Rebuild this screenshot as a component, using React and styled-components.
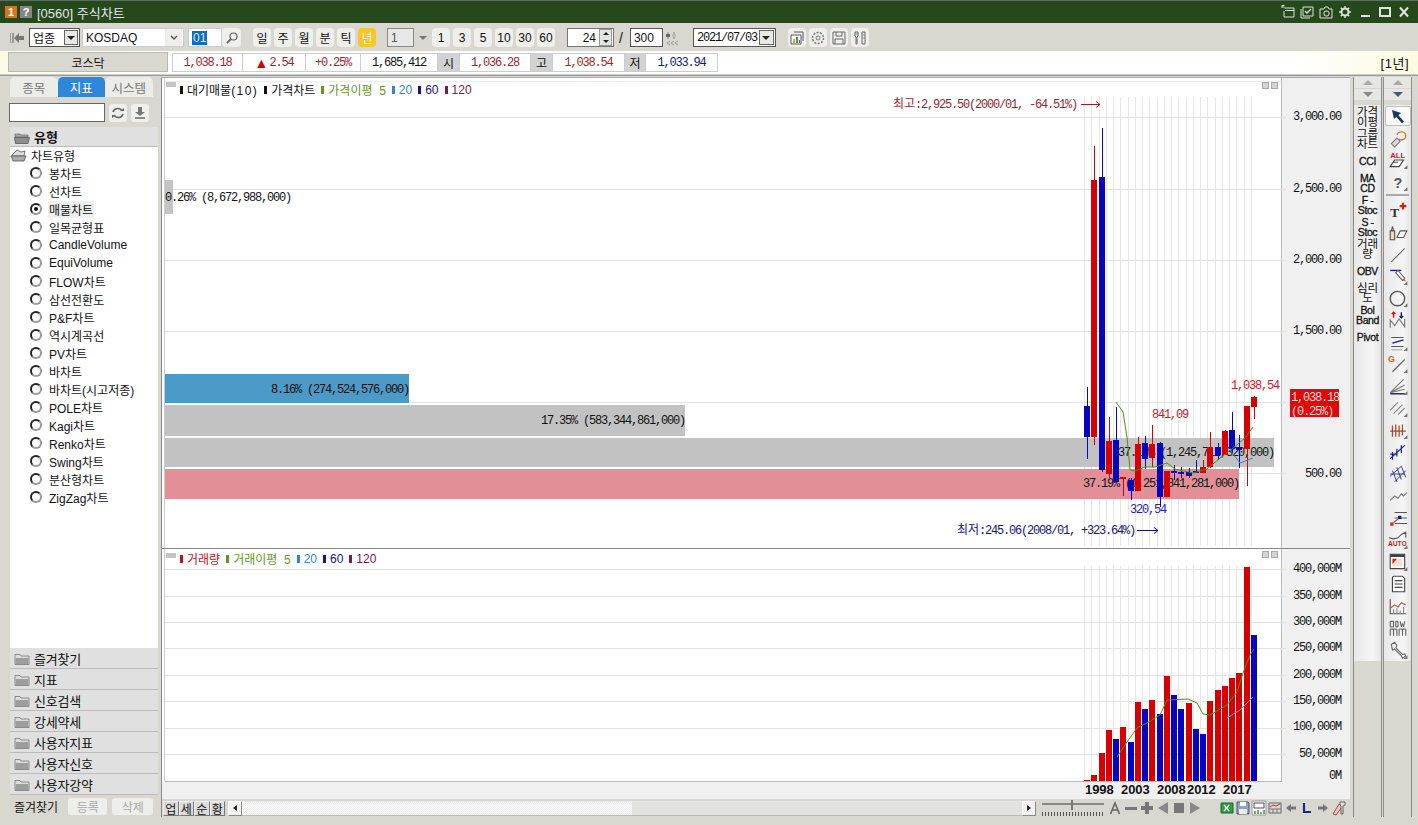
import React from "react";
import styled, { createGlobalStyle } from "styled-components";

const SANS = "'Liberation Sans','Noto Sans CJK KR',sans-serif";
const MONO = "'Liberation Mono','Noto Sans CJK KR',monospace";
const RED = "#d80000";
const BLUE = "#0606c0";

const GlobalStyle = createGlobalStyle`
  html, body { margin: 0; padding: 0; background: #d8d8d0; overflow: hidden; }
  body { font-family: ${SANS}; font-size: 12px; color: #111; }
  * { box-sizing: border-box; }
`;

// [color, wickTop, wickBottom, bodyTop, bodyBottom]
const candles = [
  ["b", 387, 459, 406, 437], ["r", 146, 445, 180, 437], ["b", 128, 472, 177, 470], ["r", 417, 480, 441, 474],
  ["b", 407, 482, 440, 482], ["r", 477, 496, 477, 479], ["b", 478, 500, 480, 491], ["r", 437, 491, 444, 491],
  ["b", 436, 469, 443, 459], ["r", 425, 467, 444, 458], ["b", 442, 507, 443, 497], ["r", 471, 497, 471, 497],
  ["b", 465, 480, 471, 473], ["b", 467, 478, 472, 474], ["b", 468, 478, 472, 476], ["b", 460, 473, 471, 473],
  ["r", 460, 473, 467, 473], ["r", 432, 468, 447, 467], ["b", 443, 460, 447, 455], ["r", 430, 455, 431, 455],
  ["b", 412, 453, 430, 449], ["b", 435, 468, 447, 450], ["r", 406, 486, 406, 449], ["r", 396, 419, 397, 407],
];

const volumes = [
  ["r", 780], ["r", 775], ["r", 753], ["r", 730], ["b", 739], ["r", 727], ["b", 742], ["r", 702],
  ["b", 709], ["r", 700], ["b", 714], ["r", 676], ["b", 695], ["b", 709], ["r", 703], ["b", 729],
  ["b", 734], ["r", 701], ["r", 690], ["r", 686], ["r", 678], ["r", 673], ["r", 567], ["b", 635],
];

const slotX = (i) => Math.round(1087 + 7.25 * i);
const chartTypes = ["봉차트", "선차트", "매물차트", "일목균형표", "CandleVolume", "EquiVolume", "FLOW차트", "삼선전환도", "P&F차트", "역시계곡선", "PV차트", "바차트", "바차트(시고저종)", "POLE차트", "Kagi차트", "Renko차트", "Swing차트", "분산형차트", "ZigZag차트"];
const folders = ["즐겨찾기", "지표", "신호검색", "강세약세", "사용자지표", "사용자신호", "사용자강약"];
const railLabels = [["가격", "이평"], ["그룹", "차트"], ["CCI"], ["MA", "CD"], ["F -", "Stoc"], ["S -", "Stoc"], ["거래", "량"], ["OBV"], ["심리", "도"], ["Bol", "Band"], ["Pivot"]];

const Page = styled.div`
  width: 1418px;
  height: 825px;
  display: flex;
  flex-direction: column;
  background: #d8d8d0;
`;

const TitleBar = styled.header`
  height: 23px;
  flex: none;
  display: flex;
  align-items: center;
  padding: 0 7px 0 5px;
  background: #25491c;
  border-top: 1px solid #5a6f58;
  color: #e4e8e2;
  font-size: 13px;
`;

const Badge = styled.span`
  width: 12px;
  height: 12px;
  margin-right: 3px;
  display: flex;
  align-items: center;
  justify-content: center;
  font: bold 11px ${SANS};
  color: #fff;
  background: ${(p) => p.$bg};
`;

const Title = styled.span`
  margin-left: 2px;
  flex: 1;
`;

const Glyph = styled.svg`
  display: block;
  flex: none;
  width: ${(p) => p.$s || 18}px;
  height: ${(p) => p.$s || 18}px;
`;

const TitleIcons = styled.div`
  display: flex;
  align-items: center;
  gap: 3px;
`;

const WindowButtons = styled.div`
  display: flex;
  align-items: center;
  gap: 5px;
  margin-left: 6px;
`;

const Toolbar = styled.div`
  height: 28px;
  flex: none;
  display: flex;
  align-items: center;
  padding: 1px 0 0 8px;
  background: #d8d8d0;
`;

const Group = styled.div`
  display: flex;
  align-items: center;
  gap: ${(p) => p.$gap || 0}px;
  margin-left: ${(p) => p.$ml || 0}px;
`;

const Field = styled.div`
  width: ${(p) => p.$w}px;
  height: 19px;
  display: flex;
  align-items: center;
  justify-content: ${(p) => p.$end ? "flex-end" : "flex-start"};
  padding: 0 3px;
  background: ${(p) => p.$bg || "#fff"};
  border: 1px solid ${(p) => p.$line || "#555"};
  border-right-color: ${(p) => p.$line || "#ccc"};
  border-bottom-color: ${(p) => p.$line || "#ccc"};
  font-family: ${(p) => p.$mono ? MONO : SANS};
  letter-spacing: ${(p) => p.$mono ? "-1.2px" : "0"};
  color: ${(p) => p.$color || "#111"};
`;

const Selected = styled.span`
  background: #0f6cc4;
  color: #dfe8f0;
  padding: 0 1px;
`;

const DropBtn = styled.div`
  width: ${(p) => p.$w || 14}px;
  height: ${(p) => p.$h || 15}px;
  margin-left: auto;
  margin-right: -2px;
  display: flex;
  align-items: center;
  justify-content: center;
  background: ${(p) => p.$bg || "#e8e8e4"};
  border: ${(p) => p.$flat ? "none" : "1px solid #666"};
`;

const Arrow = styled.span`
  width: 0;
  height: 0;
  border-left: ${(p) => p.$s || 4}px solid transparent;
  border-right: ${(p) => p.$s || 4}px solid transparent;
  ${(p) => p.$up ? "border-bottom" : "border-top"}: ${(p) => p.$s || 4}px solid ${(p) => p.$c || "#222"};
`;

const ToolBtn = styled.button`
  width: ${(p) => p.$w || 18}px;
  height: 19px;
  padding: 0;
  display: flex;
  align-items: center;
  justify-content: center;
  border: none;
  border-radius: 4px;
  background: ${(p) => p.$on ? "#f7c62f" : "#efefeb"};
  color: ${(p) => p.$on ? "#fff8d8" : "#111"};
  font: 12px ${SANS};
`;

const Spinner = styled.div`
  width: 13px;
  height: 17px;
  margin-right: -2px;
  margin-left: 3px;
  display: flex;
  flex-direction: column;
  align-items: center;
  justify-content: space-around;
  background: #e4e4e0;
  border: 1px solid #999;
`;

const Slash = styled.span`
  margin: 0 7px 0 5px;
  font-size: 14px;
`;

const InfoRow = styled.div`
  height: 24px;
  flex: none;
  display: flex;
  align-items: flex-start;
  padding: 2px 10px 0 8px;
  background: linear-gradient(90deg, #fdfbe6 0, #fff 172px, #fff 1290px, #fdfae0 100%);
  border-bottom: 1px solid #ccc;
`;

const MarketBtn = styled.div`
  width: 160px;
  height: 20px;
  margin: -1px 4px 0 0;
  display: flex;
  align-items: center;
  justify-content: center;
  background: #d8d8d0;
  border: 1px solid #b8b8b0;
`;

const Cell = styled.div`
  width: ${(p) => p.$w}px;
  height: 19px;
  display: flex;
  align-items: center;
  justify-content: center;
  background: ${(p) => p.$head ? "#d2d2d0" : "#fff"};
  border: 1px solid #c8ccd8;
  border-left: ${(p) => p.$first ? "1px solid #c8ccd8" : "none"};
  color: ${(p) => p.$color || "#111"};
  font-family: ${(p) => p.$head ? SANS : MONO};
  letter-spacing: ${(p) => p.$head ? "0" : "-1.2px"};
`;

const Triangle = styled.span`
  color: ${RED};
  font-family: ${SANS};
  font-size: 14px;
  line-height: 12px;
  letter-spacing: 0;
  margin-right: 1px;
`;

const Period = styled.div`
  margin-left: auto;
  margin-right: -1px;
  height: 19px;
  display: flex;
  align-items: center;
  font-size: 13px;
  letter-spacing: 0.5px;
`;

const Body = styled.main`
  height: 744px;
  flex: none;
  display: flex;
  padding: 1px 6px 0 8px;
  border-top: 1px solid #999;
`;

const Sidebar = styled.aside`
  width: 150px;
  height: 740px;
  flex: none;
  display: flex;
  flex-direction: column;
`;

const Tabs = styled.nav`
  height: 20px;
  flex: none;
  display: flex;
  padding: 0 5px 0 2px;
`;

const Tab = styled.div`
  width: 47.5px;
  display: flex;
  align-items: center;
  justify-content: center;
  border-radius: 5px 5px 0 0;
  background: ${(p) => p.$on ? "#2f87dc" : "#ecece8"};
  color: ${(p) => p.$on ? "#fff" : "#777"};
  font-size: 12.5px;
`;

const SearchRow = styled.div`
  height: 19px;
  flex: none;
  margin-top: 6px;
  display: flex;
  align-items: center;
  padding-left: 1px;
  gap: 4px;
`;

const SearchBox = styled.div`
  width: 96px;
  height: 19px;
  background: #fff;
  border: 1px solid #666;
`;

const IconBtn = styled.div`
  width: 18px;
  height: 18px;
  display: flex;
  align-items: center;
  justify-content: center;
  background: #efefeb;
  border-radius: 3px;
`;

const FolderHead = styled.div`
  height: ${(p) => p.$bold ? 20 : 21}px;
  flex: none;
  margin: ${(p) => p.$bold ? 5 : 0}px 0 0 2px;
  padding-left: 3px;
  display: flex;
  align-items: center;
  gap: 3px;
  background: #e0e0e0;
  border-bottom: 1px solid #bbb;
  font-weight: ${(p) => p.$bold ? "bold" : "normal"};
  font-size: 13px;
  letter-spacing: ${(p) => p.$bold ? "0" : "-0.2px"};
`;

const Tree = styled.div`
  flex: 1;
  margin-left: 2px;
  background: #fff;
`;

const TreeRoot = styled.div`
  height: 17px;
  display: flex;
  align-items: center;
  gap: 3px;
`;

const RadioRow = styled.div`
  height: 18px;
  display: flex;
  align-items: center;
  padding-left: 20px;
`;

const Radio = styled.span`
  width: 12px;
  height: 12px;
  margin-right: 6px;
  flex: none;
  display: flex;
  align-items: center;
  justify-content: center;
  border-radius: 50%;
  background: #fff;
  border: 2px solid #222;
  border-right-color: #999;
  border-bottom-color: #999;

  &::after {
    content: "";
    width: 4px;
    height: 4px;
    border-radius: 50%;
    background: ${(p) => p.$on ? "#111" : "transparent"};
  }
`;

const RadioLabel = styled.span`
  padding: 0 1px;
  white-space: nowrap;
  background: ${(p) => p.$on ? "#efefef" : "transparent"};
`;

const SideFooter = styled.div`
  height: 22px;
  flex: none;
  display: flex;
  align-items: center;
  padding-left: 6px;
`;

const FootBtn = styled.div`
  width: ${(p) => p.$w}px;
  height: 17px;
  margin-left: ${(p) => p.$ml}px;
  display: flex;
  align-items: center;
  justify-content: center;
  border-radius: 3px;
  background: #eeeeea;
  color: #aaa;
`;

const ChartFrame = styled.section`
  width: 1189px;
  height: 740px;
  flex: none;
  margin-left: 3px;
  display: flex;
  flex-direction: column;
  border-left: 1px solid #8a8a8a;
  border-top: 1px solid #aaa;
  background: #f0f0f0;
`;

const Panel = styled.div`
  position: relative;
  height: ${(p) => p.$h}px;
  flex: none;
  border-bottom: ${(p) => p.$line ? "1px solid #888" : "none"};
`;

const PlotSvg = styled.svg`
  display: block;
  width: 1188px;
  height: 100%;
`;

const PlotText = styled.text`
  font-family: ${MONO};
  font-size: 12px;
  letter-spacing: -1.2px;
`;

const Ko = styled.tspan`
  letter-spacing: 0;
`;

const YearText = styled.text`
  font-family: ${SANS};
  font-size: 13px;
  font-weight: bold;
  letter-spacing: -0.1px;
`;

const Legend = styled.div`
  position: absolute;
  left: 18px;
  top: ${(p) => p.$top}px;
  display: flex;
  align-items: center;
  gap: 6px;
  white-space: pre;
`;

const LegendItem = styled.span`
  display: flex;
  align-items: center;
  gap: 4px;
  color: ${(p) => p.$c};

  &::before {
    content: "";
    width: 3px;
    height: 8px;
    background: ${(p) => p.$c};
  }
`;

const WideDigits = styled.span`
  letter-spacing: 1.4px;
`;

const CollapseMark = styled.span`
  position: absolute;
  left: 4px;
  top: 4px;
  width: 10px;
  height: 5px;
  background: #c4c4c4;
`;

const PanelBtns = styled.div`
  position: absolute;
  left: 1100px;
  top: ${(p) => p.$top}px;
  display: flex;
  gap: 2px;
`;

const PanelBtn = styled.span`
  width: 7px;
  height: 7px;
  background: #d4d4d4;
  border: 1px solid #aaa;
`;

const ScrollRow = styled.div`
  height: 18px;
  flex: none;
  display: flex;
  align-items: center;
  background: #d8d8d0;
`;

const SheetTab = styled.div`
  width: 15.5px;
  height: 15px;
  flex: none;
  margin-left: ${(p) => p.$first ? "1px" : "0"};
  display: flex;
  align-items: center;
  justify-content: center;
  background: #dcdcdc;
  border: 1px solid #777;
  border-left-color: #eee;
  border-top-color: #eee;
  font-size: 12px;
`;

const ScrollBtn = styled.div`
  width: 14px;
  height: 15px;
  flex: none;
  margin-left: ${(p) => p.$ml || 0}px;
  display: flex;
  align-items: center;
  justify-content: center;
  background: #f2f2ee;
  border: 1px solid #888;
  border-left-color: #fff;
  border-top-color: #fff;
`;

const ScrollTrack = styled.div`
  width: 390px;
  height: 15px;
  flex: none;
  background: ${(p) => p.$thumb ? "#e2e2de" : "repeating-conic-gradient(#fff 0 25%, #ececea 0 50%) 0 0 / 2px 2px"};
  border-top: 1px solid #e8e8e8;
  border-bottom: 1px solid #bbb;
`;

const Slider = styled.div`
  position: relative;
  width: 62px;
  height: 16px;
  flex: none;
  margin-left: 6px;
`;

const SliderGroove = styled.div`
  height: 2px;
  margin-top: 3px;
  background: #888;
`;

const SliderThumb = styled.div`
  position: absolute;
  left: 29px;
  top: 0;
  width: 2px;
  height: 10px;
  background: #777;
`;

const SliderTicks = styled.div`
  position: absolute;
  left: 0;
  right: 0;
  bottom: 0;
  height: 4px;
  background: repeating-linear-gradient(90deg, #555 0 1px, transparent 1px 3px);
`;

const PlainGlyphs = styled.div`
  display: flex;
  flex: none;
  align-items: center;
  margin-left: ${(p) => p.$ml}px;
`;

const Rails = styled.div`
  margin-left: 3px;
  display: flex;
  gap: 1px;
  flex: none;
`;

const Rail = styled.div`
  width: 29px;
  height: 740px;
  display: flex;
  flex-direction: column;
  border-left: 1px solid #8c8c8c;
  border-right: 1px solid #8c8c8c;
`;

const Stepper = styled.div`
  height: 23px;
  flex: none;
  display: flex;
  flex-direction: column;
  gap: 1px;
`;

const StepBtn = styled.div`
  flex: 1;
  display: flex;
  align-items: center;
  justify-content: center;
  background: #e6e6e2;
`;

const RailList = styled.div`
  height: 556px;
  flex: none;
  margin-top: 5px;
  padding-top: 1px;
  display: flex;
  flex-direction: column;
  background: linear-gradient(90deg, #e8e8e8, #f6f6f6 70%, #e4e4e4);
`;

const RailItem = styled.div`
  height: 22px;
  flex: none;
  display: flex;
  flex-direction: column;
  align-items: center;
  justify-content: center;
  line-height: 10px;
  font-size: ${(p) => p.$latin ? "10.5px" : "11.5px"};
  letter-spacing: ${(p) => p.$latin ? "-0.4px" : "0"};
  -webkit-text-stroke: ${(p) => p.$latin ? "0.3px #111" : "0"};
  white-space: nowrap;
`;

const RailIconSlot = styled.div`
  height: 22px;
  flex: none;
  display: flex;
  align-items: center;
  justify-content: center;

  svg {
    width: 20px;
    height: 20px;
  }
`;

const PressedSlot = styled.div`
  width: 26px;
  height: 20px;
  margin: 0 auto 1px;
  display: flex;
  align-items: center;
  justify-content: center;
  background: #fafafa;
  border: 1px solid #bbb;
  border-radius: 2px;
`;

const RailRule = styled.div`
  height: 2px;
  margin: 1px 2px 3px;
  background: #aaa;
`;

const Corner = () => <path d="M14 17h3.5v-3.5z" fill="#777" />;

const Icon = ({ s = 18, corner, children }) => (
  <Glyph $s={s} viewBox={`0 0 ${s} ${s}`} fill="none">
    {children}
    {corner && <Corner />}
  </Glyph>
);

const Folder = ({ open }) => (
  <Icon s={18}>
    {open ? (
      <>
        <path d="M2 6h5l1 1h7v2H2z" fill="#a8a8a8" stroke="#666" strokeWidth=".7" />
        <path d="M1.5 9.5h14l1 0-1.5 6H2.5z" fill="#8e8e8e" stroke="#555" strokeWidth=".8" />
      </>
    ) : (
      <>
        <path d="M2 5.5h5l1 1.5h8v8.5H2z" fill="#dcdcdc" stroke="#777" strokeWidth=".8" />
        <path d="M2.6 9h12.8v6H2.6z" fill="#9d9d9d" />
      </>
    )}
  </Icon>
);

const railIcons = [
  <Icon key="a"><path d="M3 3l9 3-2.6 2.2 5.6 6.2-2 1.8-5.6-6.2L5 12z" fill="#173a5e" /></Icon>,
  <Icon key="b"><path d="M3 14l5-5 3 3-5 5z" fill="#ddd" stroke="#777" /><path d="M8 6c2-4 8-3 8 1s-4 4-6 3" stroke="#e07820" strokeWidth="1.2" /></Icon>,
  <Icon key="c" corner><text x="2" y="7" fontFamily={SANS} fontSize="7" fontWeight="bold" fill="#d02020">ALL</text><path d="M2 15l4-6h8l-4 6zM5 11l4 0" stroke="#444" fill="#fff" /></Icon>,
  <Icon key="d" corner><text x="5" y="14" fontFamily={SANS} fontSize="13" fontWeight="bold" fill="#555">?</text></Icon>,
  null,
  <Icon key="e"><text x="2" y="15" fontFamily="'Liberation Serif',serif" fontSize="12" fontWeight="bold" fill="#333">T</text><path d="M10.500 5.500h6M13.500 2.500v6" stroke="#e01818" strokeWidth="2" /></Icon>,
  <Icon key="f"><path d="M2 8h4v8H2zM3 8l1-4 1 4" stroke="#555" fill="#f2d8c0" /><path d="M8 14l3-6h6l-3 6z" stroke="#555" fill="#fff" /></Icon>,
  <Icon key="g"><path d="M3 16L15 4" stroke="#666" /></Icon>,
  <Icon key="h" corner><path d="M2 4h10" stroke="#1a1a90" strokeWidth="1.2" /><path d="M7 6l2-2 6 7-2 2z" stroke="#666" fill="#fff" /><path d="M13 13l2-2 1 3z" fill="#e06060" /></Icon>,
  <Icon key="i" corner><circle cx="8.500" cy="9.500" r="6.500" stroke="#555" strokeWidth="1.2" /></Icon>,
  <Icon key="j"><path d="M2 16V9l4 5 4-6 5 7V8" stroke="#777" /><path d="M5 7V2M3.400 3.600L5 2l1.600 1.600" stroke="#d01010" strokeWidth="1.2" /><path d="M12 2v5M10.400 5.400L12 7l1.600-1.600" stroke="#1010c0" strokeWidth="1.2" /></Icon>,
  <Icon key="k" corner><path d="M3 5h11M3 13h11" stroke="#555" /><path d="M4 10l10-3" stroke="#1a1a90" strokeWidth="1.2" /><path d="M3 16h10" stroke="#aaa" /></Icon>,
  <Icon key="l" corner><text x="0" y="7" fontFamily={SANS} fontSize="8" fontWeight="bold" fill="#d86018">G</text><path d="M4 16L15 5" stroke="#666" strokeWidth="1.1" /></Icon>,
  <Icon key="m" corner><path d="M2 15L14 3M2 15L15 8M2 15l13-3" stroke="#777" /><path d="M2 16h13" stroke="#1a1a90" strokeWidth="1.3" /></Icon>,
  <Icon key="n" corner><path d="M2 11L9 4M5 14l8-8M9 15l6-6" stroke="#888" /></Icon>,
  <Icon key="o" corner><path d="M2 10h14M4 5v10M7 4v11M10 5v10M13 4v10" stroke="#b04028" strokeWidth="1.1" /></Icon>,
  <Icon key="p"><path d="M2 15L15 3M4 9v7M8 6v7M12 3v7M2 11h6" stroke="#1f1f90" strokeWidth="1.1" /></Icon>,
  <Icon key="q"><path d="M2 11L12 2M6 16L16 6M4 6l4 10M8 3l4 11M12 2l4 10M2 9h13" stroke="#3a3a9c" strokeWidth=".9" /></Icon>,
  <Icon key="r"><path d="M2 13l4-4 3 2 3-4 2 2 3-3" stroke="#777" /></Icon>,
  <Icon key="s"><path d="M6 4h11M6 9h11M6 14h11" stroke="#555" /><path d="M9 7h3v3H9z" fill="#1515c0" /><path d="M2 13h3v3H2z" fill="#d03020" /><path d="M5 13l4-3" stroke="#c03030" /></Icon>,
  <Icon key="t" corner><path d="M1 7l4 1 4-1 3-3 4-2v5" stroke="#555" /><text x="0" y="14" fontFamily={SANS} fontSize="6" fontWeight="bold" fill="#c81818">AUTO</text></Icon>,
  <Icon key="u" corner><path d="M2 2h13v13H2z" stroke="#444" fill="#fff" /><path d="M2 2h13v2.500H2z" fill="#444" /><path d="M4 6h9v7H4z" fill="#f4e0dc" /><path d="M4 6h4l-4 5z" fill="#e02010" /></Icon>,
  <Icon key="v"><path d="M5 2h8l2 2v12H4V3z" stroke="#444" fill="#fff" /><path d="M6 6h7M6 9h7M6 12h7" stroke="#444" /></Icon>,
  <Icon key="w"><path d="M2 3v13h14" stroke="#555" /><path d="M5 16v-4M8 16v-5M11 16v-3M14 16v-6" stroke="#888" /><path d="M2 11l4-3 3 2 3-4 4 2" stroke="#c05040" /></Icon>,
  <Icon key="x"><path d="M2 3h3v5H2zM7 3h2v5H7zM11 3l1 5 1-3 1 3 1-5M2 10h6M2 10v6M5 10v6M8 10v6M10 10h6M10 10v6M13 10v6M16 10v6" stroke="#555" strokeWidth=".9" /></Icon>,
  <Icon key="y" corner><path d="M3 4l3-2 2 3-1 2 6 6 2-.5.8 2-2.600 1.800-1.200-2-6-6-2 .7z" stroke="#666" fill="#f4f4f4" /></Icon>,
];

const titleIcons = [
  <Icon key="1" s={16}><path d="M5 4h9v9H4V7M2 1.500l3 3M2 4V1.500h2.500" stroke="#dbe4d6" /><path d="M5 6.500h9" stroke="#dbe4d6" /></Icon>,
  <Icon key="2" s={16}><path d="M4 3h10v9H4zM2 5v9h9" stroke="#dbe4d6" /><path d="M6 7l2 2 4-4" stroke="#dbe4d6" strokeWidth="1.3" /></Icon>,
  <Icon key="3" s={16}><path d="M2 5h4l1-2h3l1 2h3v9H2z" stroke="#dbe4d6" /><rect x="6" y="7" width="5" height="5" rx="2" stroke="#dbe4d6" /></Icon>,
  <Icon key="4" s={16}><circle cx="8" cy="8" r="3.500" stroke="#dbe4d6" strokeWidth="2" /><path d="M8 2v2M8 12v2M2 8h2M12 8h2M3.800 3.800l1.400 1.400M10.800 10.800l1.400 1.400M3.800 12.200l1.400-1.400M10.800 5.200l1.400-1.400" stroke="#dbe4d6" strokeWidth="1.4" /></Icon>,
];

const UpperPlot = () => (
  <PlotSvg viewBox="162 78 1188 470" shapeRendering="crispEdges">
    <rect x="162" y="78" width="1120" height="470" fill="#fff" />
    <rect x="1282" y="78" width="68" height="470" fill="#f0f0f0" />
    <path d="M164.500 78v470" stroke="#c8ccd4" />
    <path d="M1281.500 78v470" stroke="#bbb" />
    <path d="M165 81.500h1116" stroke="#eee" />
    {[117, 189, 260, 331, 402, 473].map((y) => (
      <path key={y} d={`M165 ${y}.5H1286`} stroke="#e2e2e2" />
    ))}
    {candles.map((_, i) => (
      <path key={i} d={`M${Math.round(1084 + 7.25 * i)}.5 97V546`} stroke="#e6e6e6" />
    ))}
    <rect x="165" y="180" width="8" height="34" fill="#c4c4c4" />
    <rect x="165" y="374" width="244" height="29" fill="#4b9ac8" />
    <rect x="165" y="405" width="520" height="31" fill="#c2c2c2" />
    <rect x="165" y="438" width="1109" height="29" fill="#c2c2c2" />
    <rect x="165" y="469" width="1074" height="30" fill="#e38f98" />
    <PlotText x="165" y="201" fill="#111">0.26% (8,672,988,000)</PlotText>
    <PlotText x="409" y="393" textAnchor="end" fill="#111">8.16% (274,524,576,000)</PlotText>
    <PlotText x="685" y="424" textAnchor="end" fill="#111">17.35% (583,344,861,000)</PlotText>
    <PlotText x="1274" y="456" textAnchor="end" fill="#111">37.15% (1,245,712,320,000)</PlotText>
    <PlotText x="1239" y="487" textAnchor="end" fill="#111">37.19% (1,251,841,281,000)</PlotText>
    {candles.map(([c, wt, wb, bt, bb], i) => {
      const x = slotX(i);
      const col = c === "r" ? RED : BLUE;
      return (
        <g key={i} fill={col}>
          <rect x={x} y={wt} width="1" height={wb - wt} />
          <rect x={x - 3} y={bt} width="6" height={Math.max(bb - bt, 1)} />
        </g>
      );
    })}
    <g shapeRendering="auto" fill="none">
      <path d="M1116 402L1123 412 1127 437 1130 470 1135 471 1145 467 1155 467 1167 463 1175 469 1193 473 1207 469 1220 458 1233 448 1245 438 1253 427" stroke="#4f8f1a" />
      <path d="M1230 450L1240 463 1253 458" stroke="#2e86d0" />
      <path d="M1081 104.500h19M1096 101.500l4 3-4 3" stroke="#a01c2c" />
      <path d="M1137 530.500h21M1154 527.500l4 3-4 3" stroke="#12127c" />
    </g>
    <PlotText x="893" y="108" fill="#a01c2c"><Ko>최고</Ko>:2,925.50(2000/01, -64.51%)</PlotText>
    <PlotText x="957" y="534" fill="#12127c"><Ko>최저</Ko>:245.06(2008/01, +323.64%)</PlotText>
    <PlotText x="1152" y="418" fill="#c81828">841,09</PlotText>
    <PlotText x="1130" y="513" fill="#1c1cc0">320,54</PlotText>
    <PlotText x="1231" y="389" fill="#c81828">1,038,54</PlotText>
    {[[3000, 120, "3,000.00"], [2500, 192, "2,500.00"], [2000, 263, "2,000.00"], [1500, 334, "1,500.00"], [500, 477, "500.00"]].map(([k, y, t]) => (
      <PlotText key={k} x="1341" y={y} textAnchor="end" fill="#111">{t}</PlotText>
    ))}
    <rect x="1290" y="389" width="49" height="28" fill="#e00808" />
    <PlotText x="1291" y="401" fill="#f6d8d8">1,038.18</PlotText>
    <PlotText x="1291" y="415" fill="#f6d8d8">(0.25%)</PlotText>
  </PlotSvg>
);

const LowerPlot = () => (
  <PlotSvg viewBox="162 549 1188 250" shapeRendering="crispEdges">
    <rect x="162" y="549" width="1120" height="232" fill="#fff" />
    <rect x="1282" y="549" width="68" height="250" fill="#f0f0f0" />
    <rect x="162" y="782" width="1120" height="17" fill="#f0f0f0" />
    <path d="M164.500 549v232" stroke="#c8ccd4" />
    <path d="M1281.500 549v232" stroke="#bbb" />
    <path d="M165 781.500H1282" stroke="#bbb" />
    {[569, 596, 622, 648, 675, 701, 728, 754].map((y) => (
      <path key={y} d={`M165 ${y}.5H1286`} stroke="#e2e2e2" />
    ))}
    {candles.map((_, i) => (
      <path key={i} d={`M${Math.round(1084 + 7.25 * i)}.5 566V781`} stroke="#e6e6e6" />
    ))}
    {volumes.map(([c, top], i) => (
      <rect key={i} x={slotX(i) - 3} y={top} width="6" height={781 - top} fill={c === "r" ? RED : BLUE} />
    ))}
    <g shapeRendering="auto" fill="none">
      <path d="M1117 757L1127 742 1137 728 1147 723 1160 715 1167 700 1188 699 1197 703 1203 714 1210 715 1227 705 1237 692 1243 673 1250 655 1254 649" stroke="#4f8f1a" />
      <path d="M1227 718L1240 710 1253 697" stroke="#8a8ad0" />
    </g>
    {["400,000M", "350,000M", "300,000M", "250,000M", "200,000M", "150,000M", "100,000M", "50,000M"].map((t, i) => (
      <PlotText key={t} x="1341" y={[572, 599, 625, 651, 678, 704, 730, 757][i]} textAnchor="end" fill="#111">{t}</PlotText>
    ))}
    <PlotText x="1341" y="779" textAnchor="end" fill="#111">0M</PlotText>
    {[[1085, "1998"], [1121, "2003"], [1157, "2008"], [1187, "2012"], [1223, "2017"]].map(([x, t]) => (
      <YearText key={t} x={x} y="794" fill="#111">{t}</YearText>
    ))}
  </PlotSvg>
);

export default function App() {
  return (
    <Page>
      <GlobalStyle />
      <TitleBar>
        <Badge $bg="#d8741a">1</Badge>
        <Badge $bg="#858585">?</Badge>
        <Title>[0560] 주식차트</Title>
        <TitleIcons>{titleIcons}</TitleIcons>
        <WindowButtons>
          <Icon s={14}><path d="M2 11h9" stroke="#dfe6da" strokeWidth="2" /></Icon>
          <Icon s={14}><path d="M2 3h10v8H2z" stroke="#dfe6da" strokeWidth="2" /></Icon>
          <Icon s={14}><path d="M3 2.500l8 9M11 2.500l-8 9" stroke="#dfe6da" strokeWidth="2" /></Icon>
        </WindowButtons>
      </TitleBar>

      <Toolbar>
        <Icon s={18}><path d="M2 4h1v10H2zM4 4h2v10H4z" fill="#9a9a9a" /><path d="M6 9l5-5v3h5v4h-5v3z" fill="#777" /></Icon>
        <Group $ml={3}>
          <Field $w={51} $line="#555">업종<DropBtn><Arrow /></DropBtn></Field>
        </Group>
        <Group $ml={2}>
          <Field $w={102} $line="#ccc">KOSDAQ<DropBtn $w={17} $h={17} $flat $bg="#eeeeea"><Icon s={10}><path d="M2 3l3 3 3-3" stroke="#555" strokeWidth="1.4" /></Icon></DropBtn></Field>
        </Group>
        <Group $ml={4}>
          <Field $w={34} $line="#ccc"><Selected>01</Selected></Field>
          <ToolBtn $w={19}><Icon s={14}><circle cx="8.500" cy="5.500" r="3.500" stroke="#666" strokeWidth="1.2" /><path d="M6 8l-4 4" stroke="#666" strokeWidth="1.8" /></Icon></ToolBtn>
        </Group>
        <Group $ml={12} $gap={3}>
          {["일", "주", "월", "분", "틱"].map((t) => <ToolBtn key={t}>{t}</ToolBtn>)}
          <ToolBtn $on>년</ToolBtn>
        </Group>
        <Group $ml={11}>
          <Field $w={27} $line="#888" $bg="#e8e8e6" $color="#555">1</Field>
          <DropBtn $w={17} $h={19} $flat $bg="transparent"><Arrow $c="#777" /></DropBtn>
        </Group>
        <Group $ml={3} $gap={3}>
          {["1", "3", "5", "10", "30", "60"].map((t) => <ToolBtn key={t}>{t}</ToolBtn>)}
        </Group>
        <Group $ml={12}>
          <Field $w={47} $end $line="#777">24<Spinner><Arrow $up $s={3} /><Arrow $s={3} /></Spinner></Field>
          <Slash>/</Slash>
          <Field $w={33} $line="#555">300</Field>
          <Icon s={18}><path d="M5 3v7M11 3v7" stroke="#888" /><path d="M3 5h4v3H3z" fill="#666" /><path d="M9 5h4v3H9z" fill="#bbb" /><path d="M7 12l-3 2 3 2M11 12l-3 2 3 2M15 12l-3 2 3 2" stroke="#999" /></Icon>
        </Group>
        <Group $ml={12}>
          <Field $w={83} $mono $line="#555">2021/07/03<DropBtn $w={15}><Arrow /></DropBtn></Field>
        </Group>
        <Group $ml={12} $gap={3}>
          <ToolBtn><Icon s={16}><path d="M5 2h9v9" stroke="#556" /><path d="M2 5h10v9H2z" stroke="#556" fill="#fff" /><path d="M4 9h2v4H4z" fill="#e8a020" /><path d="M7 7h2v6H7z" fill="#3a9a40" /><path d="M10 10h1v3h-1z" fill="#3060c0" /></Icon></ToolBtn>
          <ToolBtn><Icon s={16}><circle cx="8" cy="8" r="5.500" stroke="#777" strokeDasharray="2 1.4" strokeWidth="1.5" /><circle cx="8" cy="8" r="2" stroke="#777" /></Icon></ToolBtn>
          <ToolBtn><Icon s={16}><path d="M2 2h12v12H2z" stroke="#666" /><path d="M5 2v4h6V2M4 14V9h8v5" stroke="#666" /></Icon></ToolBtn>
          <ToolBtn><Icon s={16}><path d="M3 2h3v4l-1 1v7H4V7L3 6zM10 2h3v12h-3z" stroke="#666" /><path d="M3 4h3M10 5h3M10 8h3" stroke="#888" /></Icon></ToolBtn>
        </Group>
      </Toolbar>

      <InfoRow>
        <MarketBtn>코스닥</MarketBtn>
        <Cell $first $w={71} $color="#b01828">1,038.18</Cell>
        <Cell $w={63} $color="#b01828"><Triangle>▲</Triangle>2.54</Cell>
        <Cell $w={55} $color="#b01828">+0.25%</Cell>
        <Cell $w={77}>1,685,412</Cell>
        <Cell $w={22} $head>시</Cell>
        <Cell $w={71} $color="#b01828">1,036.28</Cell>
        <Cell $w={22} $head>고</Cell>
        <Cell $w={72} $color="#b01828">1,038.54</Cell>
        <Cell $w={21} $head>저</Cell>
        <Cell $w={72} $color="#14148c">1,033.94</Cell>
        <Period>[1년]</Period>
      </InfoRow>

      <Body>
        <Sidebar>
          <Tabs>
            <Tab>종목</Tab>
            <Tab $on>지표</Tab>
            <Tab>시스템</Tab>
          </Tabs>
          <SearchRow>
            <SearchBox />
            <IconBtn><Icon s={14}><path d="M2 6c1-4 7-5 9-1M12 8c-1 4-7 5-9 1" stroke="#666" strokeWidth="1.6" /><path d="M9 5h4V2zM5 9H1v3z" fill="#666" /></Icon></IconBtn>
            <IconBtn><Icon s={14}><path d="M5 1h4v5h3l-5 4-5-4h3z" fill="#777" /><path d="M2 11h10v2H2z" fill="#888" /></Icon></IconBtn>
          </SearchRow>
          <FolderHead $bold><Folder open />유형</FolderHead>
          <Tree>
            <TreeRoot>
              <Icon s={18}><path d="M2 8l5-5 4 2 4-1-1 5H2z" fill="#ddd" stroke="#555" strokeWidth=".8" /><path d="M1 9h15l-2 5H3z" fill="#aaa" stroke="#555" strokeWidth=".8" /></Icon>
              차트유형
            </TreeRoot>
            {chartTypes.map((t) => (
              <RadioRow key={t}>
                <Radio $on={t === "매물차트"} />
                <RadioLabel $on={t === "매물차트"}>{t}</RadioLabel>
              </RadioRow>
            ))}
          </Tree>
          {folders.map((f) => <FolderHead key={f}><Folder />{f}</FolderHead>)}
          <SideFooter>
            즐겨찾기
            <FootBtn $w={39} $ml={10}>등록</FootBtn>
            <FootBtn $w={41} $ml={5}>삭제</FootBtn>
          </SideFooter>
        </Sidebar>

        <ChartFrame>
          <Panel $h={471} $line>
            <UpperPlot />
            <CollapseMark />
            <Legend $top={3}>
              <LegendItem $c="#111"><span>대기매물<WideDigits>(10)</WideDigits></span></LegendItem>
              <LegendItem $c="#111">가격차트</LegendItem>
              <LegendItem $c="#5f9a1c">가격이평  5</LegendItem>
              <LegendItem $c="#2e86d0">20</LegendItem>
              <LegendItem $c="#14148c">60</LegendItem>
              <LegendItem $c="#7a1c48">120</LegendItem>
            </Legend>
            <PanelBtns $top={4}><PanelBtn /><PanelBtn /></PanelBtns>
          </Panel>
          <Panel $h={250}>
            <LowerPlot />
            <CollapseMark />
            <Legend $top={1}>
              <LegendItem $c="#c01020">거래량</LegendItem>
              <LegendItem $c="#5f9a1c">거래이평  5</LegendItem>
              <LegendItem $c="#2e86d0">20</LegendItem>
              <LegendItem $c="#14148c">60</LegendItem>
              <LegendItem $c="#7a1c48">120</LegendItem>
            </Legend>
            <PanelBtns $top={2}><PanelBtn /><PanelBtn /></PanelBtns>
          </Panel>
          <ScrollRow>
            {["업", "세", "순", "황"].map((t, i) => <SheetTab key={t} $first={i === 0}>{t}</SheetTab>)}
            <ScrollBtn $ml={3}><Icon s={6}><path d="M5 0v6L1 3z" fill="#222" /></Icon></ScrollBtn>
            <ScrollTrack />
            <ScrollTrack $thumb />
            <ScrollBtn><Icon s={6}><path d="M1 0v6l4-3z" fill="#222" /></Icon></ScrollBtn>
            <Slider><SliderGroove /><SliderThumb /><SliderTicks /></Slider>
            <PlainGlyphs $ml={3}>
              <Icon s={16}><path d="M3.500 14L8 3l4.500 11M5 10h6" stroke="#666" strokeWidth="1.6" /></Icon>
              <Icon s={16}><path d="M2 7h12v3H2z" fill="#777" /></Icon>
              <Icon s={16}><path d="M6 2h4v4h4v4h-4v4H6v-4H2V6h4z" fill="#777" /></Icon>
              <Icon s={16}><path d="M13 2v12L3 8z" fill="#888" /></Icon>
              <Icon s={16}><path d="M3 3h10v10H3z" fill="#777" /></Icon>
              <Icon s={16}><path d="M3 2v12l10-6z" fill="#888" /></Icon>
            </PlainGlyphs>
            <PlainGlyphs $ml={16}>
              <Icon s={16}><path d="M2 3h12v10H2z" fill="#2f9e44" stroke="#176b2c" /><path d="M5 5l5 6M10 5l-5 6" stroke="#fff" strokeWidth="1.2" /></Icon>
              <Icon s={16}><path d="M2 2h11l1 1v11H2z" fill="#8ca4c8" stroke="#556" /><path d="M5 2h6v4H5z" fill="#fff" /><path d="M4 9h8v5H4z" fill="#eee" /></Icon>
              <Icon s={16}><path d="M1 1h14v14H1z" fill="#f8f8f8" stroke="#999" /><path d="M3 3h10v5H3z" stroke="#555" /><path d="M4 14v-3M7 14v-4M10 14v-2M13 14v-4" stroke="#3a8a3a" strokeWidth="1.4" /></Icon>
              <Icon s={16}><path d="M2 3h12v10H2z" stroke="#666" /><path d="M2 9h12M6 9v4M10 9v4" stroke="#777" /><path d="M3 7l3-2 3 1 4-2" stroke="#c03030" /></Icon>
              <Icon s={16}><path d="M3 8l5-4v2.500h5v3H8V12z" fill="#777" /></Icon>
              <Icon s={16}><path d="M5 3v9h7" stroke="#1c2c7c" strokeWidth="2.2" /></Icon>
              <Icon s={16}><path d="M13 8L8 4v2.500H3v3h5V12z" fill="#777" /></Icon>
              <Icon s={16}><path d="M2 14L8 4l3 3-6 8z" fill="#e8c8c0" stroke="#b05040" /><path d="M9 2h5v3l-2 1v8h-2V6L9 5z" fill="#ddd" stroke="#666" /></Icon>
            </PlainGlyphs>
          </ScrollRow>
        </ChartFrame>

        <Rails>
          <Rail>
            <Stepper>
              <StepBtn><Arrow $up $s={5} $c="#aaa" /></StepBtn>
              <StepBtn><Arrow $s={5} $c="#888" /></StepBtn>
            </Stepper>
            <RailList>
              {railLabels.map((lines) => {
                const latin = /[A-Za-z]/.test(lines.join(""));
                return (
                  <RailItem key={lines.join("")} $latin={latin}>
                    {lines.map((l) => <span key={l}>{l}</span>)}
                  </RailItem>
                );
              })}
            </RailList>
          </Rail>
          <Rail>
            <Stepper>
              <StepBtn><Arrow $up $s={5} $c="#aaa" /></StepBtn>
              <StepBtn><Arrow $s={5} $c="#445a78" /></StepBtn>
            </Stepper>
            <RailList>
              {railIcons.map((ic, i) => {
                if (!ic) return <RailRule key={i} />;
                if (i === 0) return <PressedSlot key={i}>{ic}</PressedSlot>;
                return <RailIconSlot key={i}>{ic}</RailIconSlot>;
              })}
            </RailList>
          </Rail>
        </Rails>
      </Body>
    </Page>
  );
}
